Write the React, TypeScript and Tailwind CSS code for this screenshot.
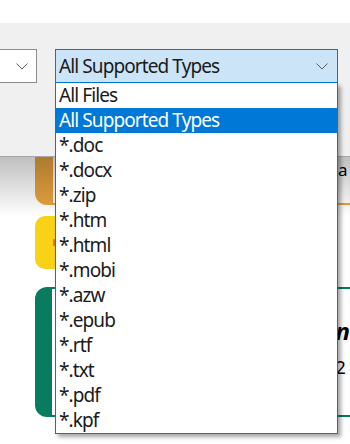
const fileTypes = [
  "All Files",
  "All Supported Types",
  "*.doc",
  "*.docx",
  "*.zip",
  "*.htm",
  "*.html",
  "*.mobi",
  "*.azw",
  "*.epub",
  "*.rtf",
  "*.txt",
  "*.pdf",
  "*.kpf",
];

function Chevron({ className }: { className?: string }) {
  return (
    <svg className={className} width="12" height="7" viewBox="0 0 12 7" fill="none">
      <path d="M0.5 0.5L6 6L11.5 0.5" stroke="#5f5f5f" strokeWidth="1" />
    </svg>
  );
}

export default function App() {
  const selected = "All Supported Types";

  return (
    <div
      className="relative w-[350px] h-[444px] overflow-hidden bg-white text-black"
      style={{ fontFamily: '"Noto Sans", "Open Sans", sans-serif' }}
    >
      {/* white strip above the dialog bar */}
      <div className="h-[23px] bg-white" />

      {/* dialog bar with the two selects */}
      <div className="h-[134px] bg-[#f0f0f0] border-b border-[#a8a8a8] pt-[26px]">
        <div className="flex gap-[18px]">
          <div className="w-[37px] h-[34px] bg-white border border-l-0 border-[#8d8d8d] flex items-center justify-end pr-[8px]">
            <Chevron />
          </div>
          <div className="w-[283px] h-[34px] bg-[#cce4f7] border border-[#0078d7] flex items-center justify-between pl-[3px] pr-[9px]">
            <span className="text-[19px] leading-none tracking-[-0.9px] text-[#1a1a1a]">{selected}</span>
            <Chevron />
          </div>
        </div>
      </div>

      {/* page content behind the dialog */}
      <div className="flex flex-col pl-[35px]">
        {/* orange card */}
        <div className="flex h-[48px]">
          <div className="w-[18px] bg-[#e8a33e] rounded-bl-[12px]" />
          <div className="flex-1 bg-white border-b-2 border-[#e8a33e] pl-[285px] pt-[1px]">
            <span className="text-[17px] leading-none">a</span>
          </div>
        </div>

        {/* yellow badge */}
        <div className="mt-[11px] w-[70px] h-[53px] rounded-[10px] bg-[#f8d216] flex items-center pl-[18px]">
          <div className="w-[3px] h-[7px] bg-[#e07a1a] rounded-[1px]" />
        </div>

        {/* green card */}
        <div className="mt-[18px] flex h-[130px]">
          <div className="w-[18px] bg-[#077c5e] rounded-l-[12px]" />
          <div className="flex-1 bg-white border-y-2 border-[#077c5e] pl-[284px] pt-[30px] flex flex-col">
            <span className="text-[24px] leading-none font-bold italic">n</span>
            <span className="mt-[15px] text-[18px] leading-none">2</span>
          </div>
        </div>
      </div>

      {/* dialog drop shadow over the page */}
      <div className="absolute left-0 right-0 top-[157px] h-[60px] pointer-events-none bg-gradient-to-b from-black/25 to-transparent" />

      {/* open dropdown list */}
      <ul className="absolute left-[55px] top-[83px] w-[283px] bg-white border border-t-0 border-[#0078d7] shadow-[3px_3px_4px_rgba(0,0,0,0.35)]">
        {fileTypes.map((t) => (
          <li
            key={t}
            className={`h-[25px] flex items-center pl-[3px] text-[19px] leading-none tracking-[-0.9px] ${
              t === selected ? "bg-[#0078d7] text-white" : "text-[#1a1a1a]"
            }`}
          >
            {t}
          </li>
        ))}
      </ul>
    </div>
  );
}
